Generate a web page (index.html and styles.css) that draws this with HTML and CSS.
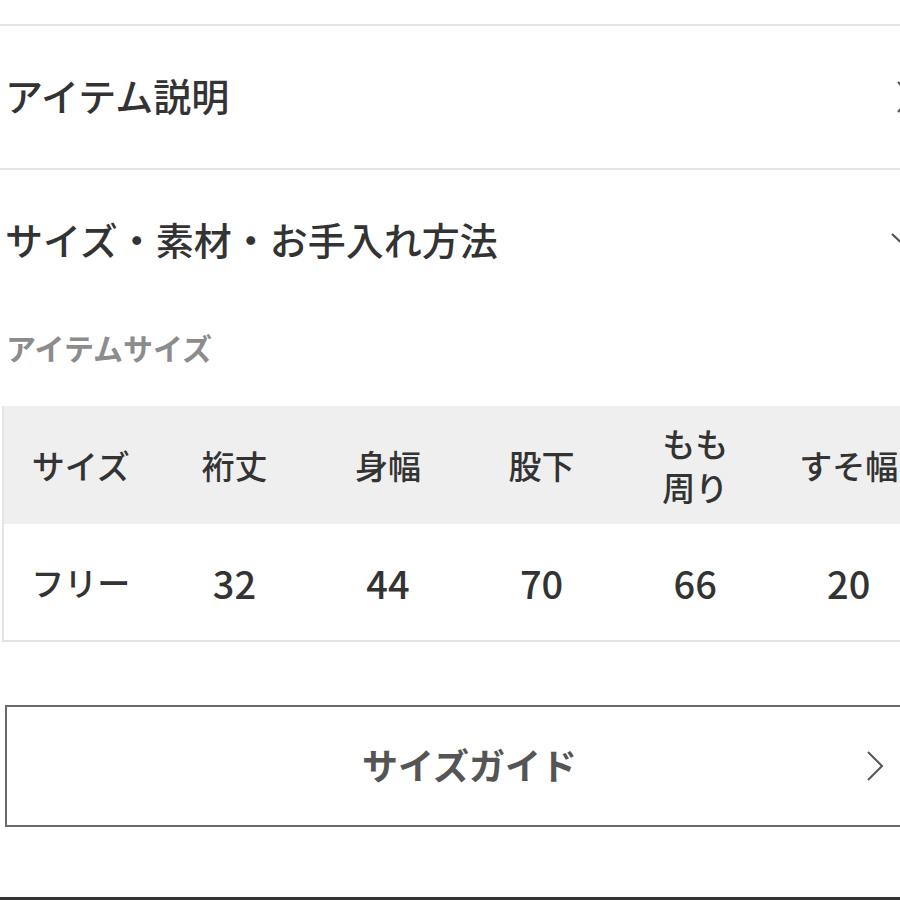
FILE: index.html
```html
<!DOCTYPE html>
<html lang="ja">
<head>
<meta charset="utf-8">
<title>サイズ・素材・お手入れ方法</title>
<link rel="stylesheet" href="styles.css">
</head>
<body>
<div class="page">
  <div class="acc acc-first">
    <span class="acc-title">アイテム説明</span>
    <svg class="chev-right" width="18" height="34" viewBox="0 0 18 34"><path d="M2 2 L16 17 L2 32" fill="none" stroke="#555" stroke-width="2.2"/></svg>
  </div>
  <div class="acc acc-open">
    <span class="acc-title">サイズ・素材・お手入れ方法</span>
    <svg class="chev-down" width="34" height="18" viewBox="0 0 34 18"><path d="M2 2 L17 16 L32 2" fill="none" stroke="#555" stroke-width="2.2"/></svg>
  </div>
  <div class="sub-title">アイテムサイズ</div>
  <table class="size-table">
    <thead>
      <tr>
        <th>サイズ</th>
        <th>裄丈</th>
        <th>身幅</th>
        <th>股下</th>
        <th>もも<br>周り</th>
        <th>すそ幅</th>
      </tr>
    </thead>
    <tbody>
      <tr>
        <td>フリー</td>
        <td class="num">32</td>
        <td class="num">44</td>
        <td class="num">70</td>
        <td class="num">66</td>
        <td class="num">20</td>
      </tr>
    </tbody>
  </table>
  <div class="guide-btn">
    <span class="guide-label">サイズガイド</span>
    <svg class="guide-chev" width="20" height="32" viewBox="0 0 20 32"><path d="M3 2 L17 16 L3 30" fill="none" stroke="#555" stroke-width="2"/></svg>
  </div>
</div>
<div class="bottom-line"></div>
</body>
</html>
```

FILE: styles.css
```css
html, body {
  margin: 0;
  padding: 0;
  background: #fff;
  overflow: hidden;
  width: 900px;
  height: 900px;
}

body {
  font-family: "Noto Sans CJK JP", "Noto Sans", sans-serif;
  color: #333;
  position: relative;
}

.page {
  width: 934px;
  padding-top: 24px;
}

.acc {
  display: flex;
  align-items: center;
  justify-content: space-between;
  padding-left: 5px;
}

.acc-first {
  height: 142px;
  border-top: 2px solid #e6e6e6;
  border-bottom: 2px solid #e6e6e6;
}

.acc-open {
  height: 142px;
}

.acc-title {
  font-size: 38px;
  font-weight: 500;
  color: #333;
  position: relative;
  top: -3px;
}

.chev-right {
  margin-right: 20px;
}

.chev-down {
  margin-right: 10px;
}

.sub-title {
  padding-left: 6px;
  margin-top: 15px;
  font-size: 30px;
  font-weight: 700;
  color: #8c8c8c;
  height: 40px;
  line-height: 40px;
}

.size-table {
  margin-top: 39px;
  margin-left: 2px;
  border-collapse: collapse;
  table-layout: fixed;
  width: 922px;
  border-left: 2px solid #e4e4e4;
  border-bottom: 2px solid #e4e4e4;
}

.size-table th,
.size-table td {
  width: 153.6px;
  text-align: center;
  vertical-align: middle;
  padding: 0;
  color: #333;
}

.size-table th {
  background: #efefef;
  height: 118px;
  font-size: 33px;
  font-weight: 500;
  line-height: 44px;
}

.size-table td {
  background: #fff;
  height: 116px;
  font-size: 33px;
  font-weight: 500;
}

.size-table td.num {
  font-size: 38px;
}

.guide-btn {
  margin-top: 63px;
  margin-left: 5px;
  height: 118px;
  border: 2px solid #6a6a6a;
  display: flex;
  align-items: center;
  justify-content: center;
  position: relative;
}

.guide-label {
  font-size: 36px;
  font-weight: 700;
  color: #555;
  position: relative;
  top: -2px;
}

.guide-chev {
  position: absolute;
  left: 858px;
  top: 43px;
}

.bottom-line {
  position: absolute;
  left: 0;
  top: 897px;
  width: 900px;
  height: 3px;
  background: #333;
}
```
